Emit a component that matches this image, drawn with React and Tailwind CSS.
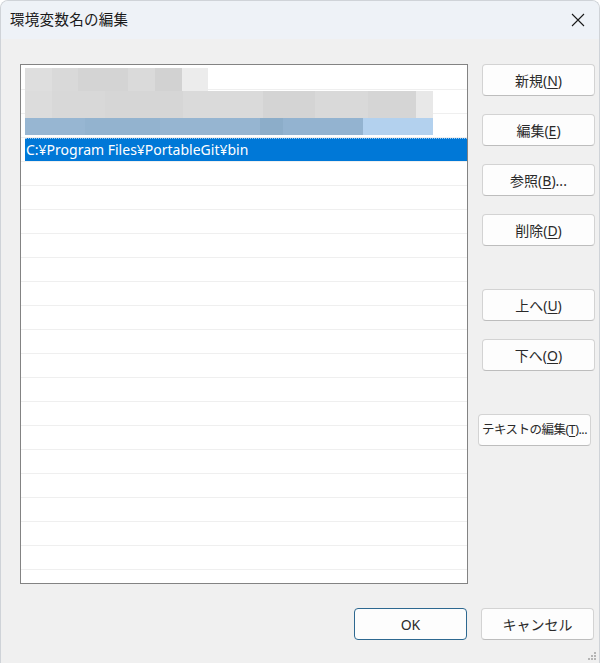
import React from 'react';

const font = { fontFamily: '"Noto Sans", "Noto Sans CJK JP", sans-serif' };

const blurTop = [
  { w: 'w-[27px]', c: 'bg-[#dedede]' },
  { w: 'w-[26px]', c: 'bg-[#d9d9d9]' },
  { w: 'w-[50px]', c: 'bg-[#d4d4d4]' },
  { w: 'w-[27px]', c: 'bg-[#dadada]' },
  { w: 'w-[27px]', c: 'bg-[#d2d2d2]' },
  { w: 'w-[26px]', c: 'bg-[#ececec]' },
];

const blurMid = [
  { w: 'w-[27px]', c: 'bg-[#dcdcdc]' },
  { w: 'w-[53px]', c: 'bg-[#d8d8d8]' },
  { w: 'w-[78px]', c: 'bg-[#d6d6d6]' },
  { w: 'w-[80px]', c: 'bg-[#dadada]' },
  { w: 'w-[52px]', c: 'bg-[#d4d4d4]' },
  { w: 'w-[53px]', c: 'bg-[#d9d9d9]' },
  { w: 'w-[48px]', c: 'bg-[#d5d5d5]' },
  { w: 'w-[17px]', c: 'bg-[#e8e8e8]' },
];

const blurBlue = [
  { w: 'w-[60px]', c: 'bg-[#97b6d2]' },
  { w: 'w-[75px]', c: 'bg-[#93b3cf]' },
  { w: 'w-[100px]', c: 'bg-[#96b5d1]' },
  { w: 'w-[23px]', c: 'bg-[#8cadc9]' },
  { w: 'w-[80px]', c: 'bg-[#93b3d0]' },
  { w: 'w-[70px]', c: 'bg-[#b3d1ee]' },
];

function Btn({ children, className = '' }) {
  return (
    <button
      className={
        'h-[32px] w-[113px] shrink-0 whitespace-nowrap rounded-[4px] border border-[#d3d3d3] border-b-[#bdbdbd] bg-[#fdfdfd] text-[#2a2a2a] flex items-center justify-center ' +
        className
      }
    >
      {children}
    </button>
  );
}

function Key({ k }) {
  return <span className="underline underline-offset-2">{k}</span>;
}

export default function App() {
  const rows = Array.from({ length: 22 });

  return (
    <div
      className="w-[600px] h-[663px] bg-[#f0f0f0] flex flex-col overflow-hidden rounded-t-[8px] border-t border-x border-[#cfd3d8] relative"
      style={font}
    >
      {/* title bar */}
      <div className="h-[38px] shrink-0 bg-[#eef2f7] flex items-center justify-between pl-[9px] pr-[14px]">
        <span className="text-[14.5px] text-[#1a1a1a] tracking-[0.3px]">環境変数名の編集</span>
        <svg width="14" height="14" viewBox="0 0 14 14">
          <path d="M1 1L13 13M13 1L1 13" stroke="#1a1a1a" strokeWidth="1.1" />
        </svg>
      </div>

      <div className="flex pt-[25px] pl-[19px]">
        {/* list */}
        <div className="w-[448px] h-[520px] border border-[#838383] bg-white pt-[1px] overflow-hidden relative">
          {rows.map((_, i) => (
            <div key={i} className="h-[24px] border-b border-[#efefef]">
              {i === 3 && (
                <div className="ml-[4px] h-[23px] bg-[#0078d7] border-t border-dotted border-[#9cc8ee] flex items-center pl-[1px] text-[14px] text-white leading-none">
                  C:¥Program Files¥PortableGit¥bin
                </div>
              )}
            </div>
          ))}

          {/* redacted entries */}
          <div className="absolute left-[4px] top-[3px] flex flex-col">
            <div className="flex h-[23px]">
              {blurTop.map((s, i) => (
                <div key={i} className={s.w + ' ' + s.c} />
              ))}
            </div>
            <div className="flex h-[27px]">
              {blurMid.map((s, i) => (
                <div key={i} className={s.w + ' ' + s.c} />
              ))}
            </div>
            <div className="flex h-[17px]">
              {blurBlue.map((s, i) => (
                <div key={i} className={s.w + ' ' + s.c} />
              ))}
            </div>
          </div>
        </div>

        {/* side buttons */}
        <div className="ml-[10px] w-[117px] flex flex-col">
          <Btn className="ml-[4px] text-[14px]">
            新規(<Key k="N" />)
          </Btn>
          <Btn className="ml-[4px] mt-[18px] text-[14px]">
            編集(<Key k="E" />)
          </Btn>
          <Btn className="ml-[4px] mt-[18px] text-[14px]">
            参照(<Key k="B" />)...
          </Btn>
          <Btn className="ml-[4px] mt-[18px] text-[14px]">
            削除(<Key k="D" />)
          </Btn>
          <Btn className="ml-[4px] mt-[43px] text-[14px]">
            上へ(<Key k="U" />)
          </Btn>
          <Btn className="ml-[4px] mt-[18px] text-[14px]">
            下へ(<Key k="O" />)
          </Btn>
          <Btn className="mt-[43px] text-[12.5px] tracking-[-0.5px]">
            テキストの編集(<Key k="T" />)...
          </Btn>
        </div>
      </div>

      {/* bottom buttons */}
      <div className="flex justify-end gap-[14px] pr-[5px] mt-[24px]">
        <button className="h-[32px] w-[113px] rounded-[4px] border border-[#2d6890] bg-[#fdfdfd] text-[14px] text-[#2a2a2a]">
          OK
        </button>
        <Btn className="text-[14px]">キャンセル</Btn>
      </div>

      {/* resize grip */}
      <svg className="absolute right-[2px] bottom-[2px]" width="10" height="10" viewBox="0 0 10 10">
        <rect x="7" y="1" width="2" height="2" fill="#b5b5b5" />
        <rect x="4" y="4" width="2" height="2" fill="#b5b5b5" />
        <rect x="7" y="4" width="2" height="2" fill="#b5b5b5" />
        <rect x="1" y="7" width="2" height="2" fill="#b5b5b5" />
        <rect x="4" y="7" width="2" height="2" fill="#b5b5b5" />
        <rect x="7" y="7" width="2" height="2" fill="#b5b5b5" />
      </svg>
    </div>
  );
}
